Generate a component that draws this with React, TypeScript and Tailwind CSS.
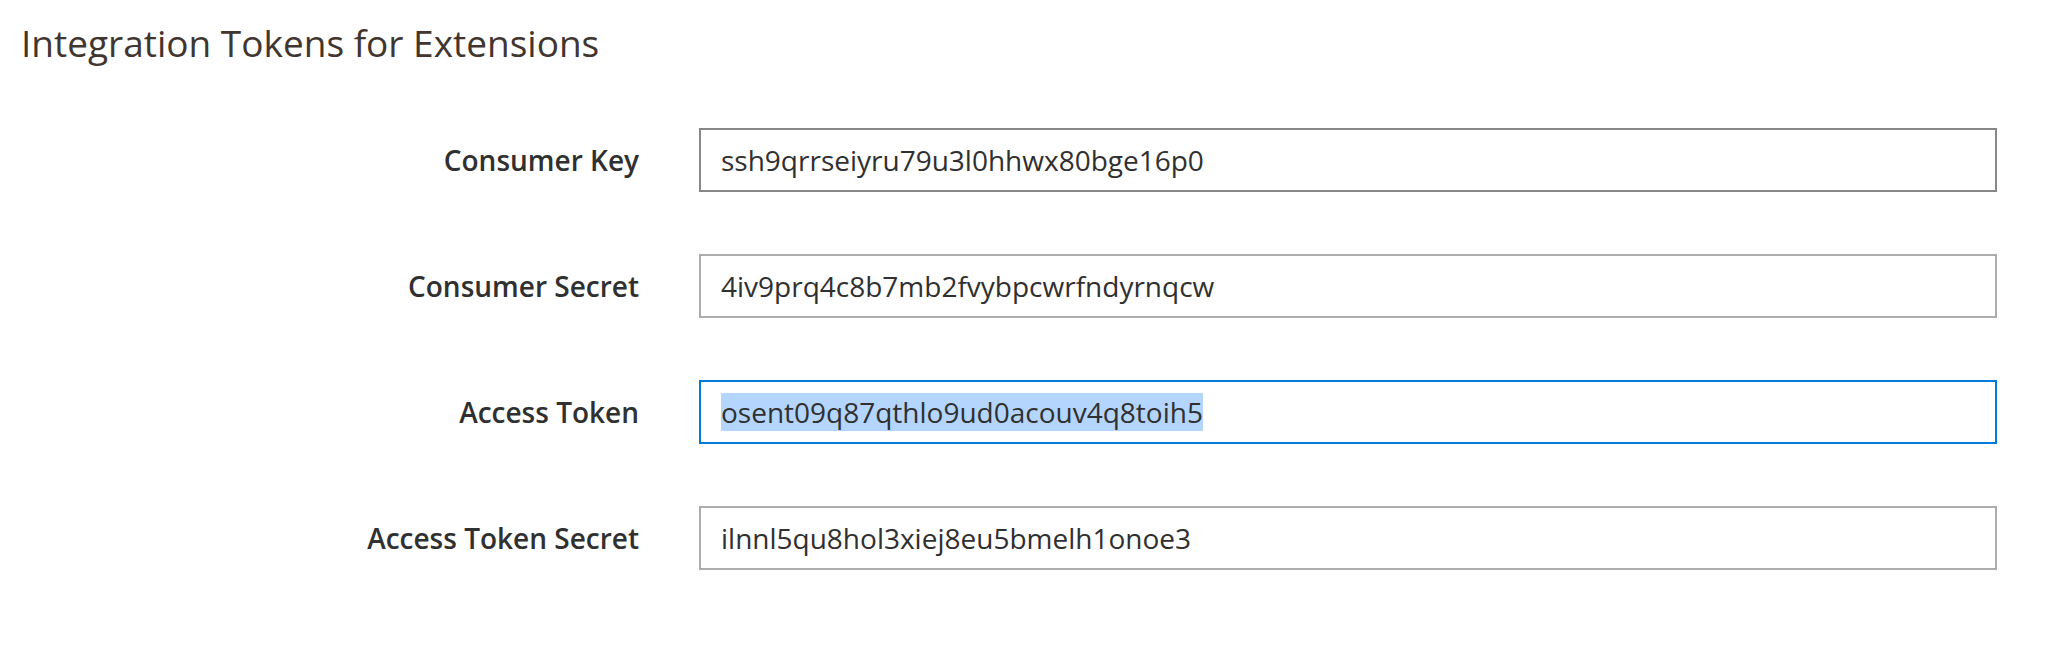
import React from "react";

const rows = [
  { label: "Consumer Key", value: "ssh9qrrseiyru79u3l0hhwx80bge16p0", state: "hover" },
  { label: "Consumer Secret", value: "4iv9prq4c8b7mb2fvybpcwrfndyrnqcw", state: "normal" },
  { label: "Access Token", value: "osent09q87qthlo9ud0acouv4q8toih5", state: "focus" },
  { label: "Access Token Secret", value: "ilnnl5qu8hol3xiej8eu5bmelh1onoe3", state: "normal" },
];

export default function App() {
  return (
    <div className="w-[2066px] h-[660px] bg-white" style={{ fontFamily: '"Open Sans", sans-serif' }}>
      <div className="pl-[21px] pt-[21px]">
        <h1 className="text-[37px] leading-[44px] font-normal text-[#41362f]">Integration Tokens for Extensions</h1>
      </div>
      <div className="mt-[63px] flex flex-col gap-[62px]">
        {rows.map((r) => (
          <div key={r.label} className="flex items-center">
            <div className="w-[639px] text-right text-[28px] font-semibold text-[#303030] leading-[38px]">{r.label}</div>
            <div
              className={
                r.state === "focus"
                  ? "ml-[60px] w-[1298px] h-[64px] border-2 border-[#007bdb] px-[20px] flex items-center text-[28px] leading-[38px] text-[#303030]"
                  : r.state === "hover"
                  ? "ml-[60px] w-[1298px] h-[64px] border-2 border-[#878787] px-[20px] flex items-center text-[28px] leading-[38px] text-[#303030]"
                  : "ml-[60px] w-[1298px] h-[64px] border-2 border-[#adadad] px-[20px] flex items-center text-[28px] leading-[38px] text-[#303030]"
              }
            >
              {r.state === "focus" ? <span className="bg-[#b4d5fe]">{r.value}</span> : <span>{r.value}</span>}
            </div>
          </div>
        ))}
      </div>
    </div>
  );
}
